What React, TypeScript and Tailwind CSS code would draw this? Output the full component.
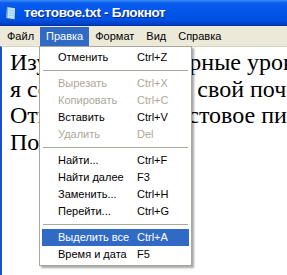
import React from "react";

type Item = { label: string; sc: string; disabled?: boolean; active?: boolean } | { sep: true };

const items: Item[] = [
  { label: "Отменить", sc: "Ctrl+Z" },
  { sep: true },
  { label: "Вырезать", sc: "Ctrl+X", disabled: true },
  { label: "Копировать", sc: "Ctrl+C", disabled: true },
  { label: "Вставить", sc: "Ctrl+V" },
  { label: "Удалить", sc: "Del", disabled: true },
  { sep: true },
  { label: "Найти...", sc: "Ctrl+F" },
  { label: "Найти далее", sc: "F3" },
  { label: "Заменить...", sc: "Ctrl+H" },
  { label: "Перейти...", sc: "Ctrl+G" },
  { sep: true },
  { label: "Выделить все", sc: "Ctrl+A", active: true },
  { label: "Время и дата", sc: "F5" },
];

const menuBar = ["Файл", "Правка", "Формат", "Вид", "Справка"];

function NotepadIcon() {
  return (
    <svg width="16" height="16" viewBox="0 0 16 16">
      <path d="M3 1.5 L12.5 3 L12 15 L2.5 13.5 Z" fill="#1d4fb8" />
      <path d="M4 2 L12 3.3 L11.6 14.2 L3.4 12.9 Z" fill="#bfe3fb" />
      <path d="M4 2 L5.2 2.2 L4.6 13.1 L3.4 12.9 Z" fill="#6fa9e6" />
      <path d="M6 5 L10.8 5.8 M6 7.5 L10.7 8.3 M6 10 L10.6 10.8" stroke="#8cc4f0" strokeWidth="0.8" />
    </svg>
  );
}

export default function App() {
  return (
    <div
      className="relative w-[287px] h-[275px] overflow-hidden bg-white flex flex-col"
      style={{ fontFamily: '"Liberation Sans", Arial, sans-serif' }}
    >
      {/* Title bar */}
      <div className="h-[26px] shrink-0 flex items-center pl-[3px] bg-[linear-gradient(to_bottom,#3d8cf5_0px,#0a5ded_3px,#0055ea_12px,#0050e0_20px,#0040c8_24px,#00309f_26px)]">
        <NotepadIcon />
        <span className="ml-[5px] text-white font-bold text-[13.5px] tracking-[-0.3px] [text-shadow:1px_1px_0_#0a2a8a]">
          тестовое.txt - Блокнот
        </span>
      </div>

      {/* Menu bar */}
      <div className="h-[20px] shrink-0 flex bg-[#ECE9D8] text-[11px] text-black">
        <div className="w-[1px]" />
        {menuBar.map((m) => (
          <div
            key={m}
            className={
              "mt-[1px] h-[19px] flex items-center px-[6px] " +
              (m === "Правка" ? "bg-[#316AC5] text-white" : "")
            }
          >
            {m}
          </div>
        ))}
      </div>

      {/* Edit area */}
      <div
        className="flex-1 border-l-2 border-l-[#1a4fd0] border-t border-t-[#d8d4c4] pl-[8px] pt-[2px] text-[24px] leading-[26.7px] text-black whitespace-nowrap"
        style={{ fontFamily: '"Liberation Serif", "Times New Roman", serif' }}
      >
        <div>
          Изу<span className="tracking-[-0.45px]">чаю компьюте</span>рные уроки
        </div>
        <div>
          я с<span className="tracking-[0.35px]">овершенствую</span> свой почерк
        </div>
        <div>
          От<span className="tracking-[-0.85px]">крываю мое тек</span>стовое письмо
        </div>
        <div>Повторяю.</div>
      </div>

      {/* Dropdown menu */}
      <div className="absolute left-[39px] top-[46px] w-[153px] bg-white border border-[#ACA899] py-[2px] px-[2px] shadow-[2px_2px_2px_rgba(0,0,0,0.35)] text-[11px]">
        {items.map((it, i) =>
          "sep" in it ? (
            <div key={i} className="h-[9px] flex items-center px-[1px]">
              <div className="h-[1px] w-full bg-[#ACA899]" />
            </div>
          ) : (
            <div
              key={i}
              className={
                "h-[17px] flex items-center pl-[16px] " +
                (it.active ? "bg-[#316AC5] text-white" : it.disabled ? "text-[#ACA899]" : "text-black")
              }
            >
              <span className="w-[79px]">{it.label}</span>
              <span>{it.sc}</span>
            </div>
          )
        )}
      </div>
    </div>
  );
}
